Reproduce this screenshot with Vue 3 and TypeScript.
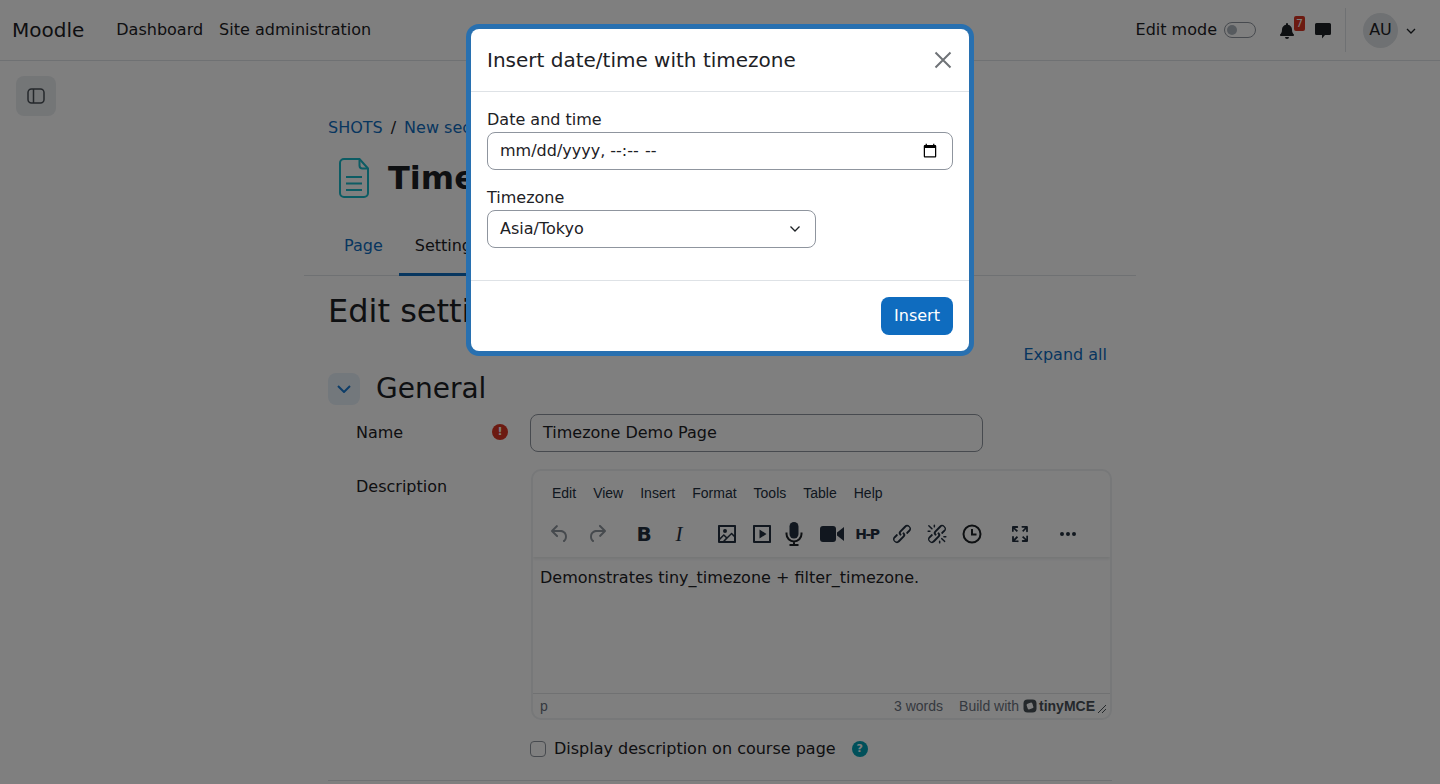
<script setup lang="ts">
const menuItems = ['Edit', 'View', 'Insert', 'Format', 'Tools', 'Table', 'Help']
</script>

<template>
  <div class="page">
    <header class="navbar">
      <span class="brand">Moodle</span>
      <nav class="primary">
        <a>Dashboard</a>
        <a>Site administration</a>
      </nav>
      <div class="nav-right">
        <span class="edit-label">Edit mode</span>
        <span class="switch"><i></i></span>
        <span class="bell">
          <svg width="14" height="16" viewBox="0 0 448 512"><path fill="#1d2125" d="M224 512a64 64 0 0 0 64-64H160a64 64 0 0 0 64 64zm215-150c-19-21-55-52-55-154 0-78-54-140-128-155V32a32 32 0 1 0-64 0v21C118 68 64 130 64 208c0 102-36 133-55 154a31 31 0 0 0-9 22c0 16 13 32 32 32h384c19 0 32-16 32-32a31 31 0 0 0-9-22z" /></svg>
          <b class="badge">7</b>
        </span>
        <svg class="comment" width="18" height="18" viewBox="0 0 18 18"><path fill="#1d2125" d="M2.500 1h13A1.500 1.500 0 0 1 17 2.500v9a1.500 1.500 0 0 1-1.500 1.500H11l-3 3.500V13H2.500A1.500 1.500 0 0 1 1 11.500v-9A1.500 1.500 0 0 1 2.500 1z" /></svg>
        <span class="divider"></span>
        <span class="avatar">AU</span>
        <svg class="caret" width="10" height="6" viewBox="0 0 10 6"><path d="M1 1l4 4 4-4" fill="none" stroke="#1d2125" stroke-width="1.300" /></svg>
      </div>
    </header>

    <button class="drawer-toggle">
      <svg width="18" height="16" viewBox="0 0 18 16"><rect x="1" y="1" width="16" height="14" rx="3.500" fill="none" stroke="#495057" stroke-width="1.500" /><path d="M6.500 1v14" stroke="#495057" stroke-width="1.500" /></svg>
    </button>

    <main class="column">
      <div class="inner">
        <div class="crumbs"><a>SHOTS</a><span>/</span><a>New section</a></div>
        <div class="title-row">
          <svg class="page-icon" width="30" height="40" viewBox="0 0 30 40"><path d="M5 1h15.500L29 10.500V35a4 4 0 0 1-4 4H5a4 4 0 0 1-4-4V5a4 4 0 0 1 4-4z" fill="none" stroke="#18b8c8" stroke-width="2" /><path d="M20.500 1v6.500a3 3 0 0 0 3 3H29M7 19h16M7 25.500h16M7 32h16" fill="none" stroke="#18b8c8" stroke-width="2" /></svg>
          <h1>Timezone Demo Page</h1>
        </div>
      </div>
      <div class="tabs">
        <a>Page</a>
        <a class="active">Settings</a>
      </div>
      <div class="inner">
        <h2>Edit settings</h2>
        <div class="expand-row"><a>Expand all</a></div>
        <div class="section-head">
          <span class="collapse"><svg width="14" height="8" viewBox="0 0 14 8"><path d="M1 1l6 6 6-6" fill="none" stroke="#1b7bd0" stroke-width="2" /></svg></span>
          <h3>General</h3>
        </div>
        <div class="field name-field">
          <label>Name</label>
          <span class="req">!</span>
          <div class="fake-input">Timezone Demo Page</div>
        </div>
        <div class="field desc-field">
          <label>Description</label>
          <div class="editor">
            <div class="menubar">
              <span v-for="item in menuItems" :key="item">{{ item }}</span>
            </div>
            <div class="toolbar">
              <svg class="tb off" viewBox="0 0 24 24"><path d="M6.400 8H12c3.700 0 6.200 2 6.800 5.100.6 2.700-.4 5.600-2.300 6.800a1 1 0 0 1-1-1.800c1.100-.6 1.800-2.700 1.400-4.600-.5-2.100-2.100-3.500-4.900-3.500H6.400l3.300 3.300a1 1 0 1 1-1.400 1.400l-5-5a1 1 0 0 1 0-1.400l5-5a1 1 0 0 1 1.400 1.400L6.400 8Z" /></svg>
              <svg class="tb off redo" viewBox="0 0 24 24"><path d="M17.600 10H12c-2.800 0-4.400 1.400-4.900 3.500-.4 2 .3 4 1.400 4.600a1 1 0 1 1-1 1.800c-2-1.200-2.900-4.100-2.300-6.800.6-3 3-5.100 6.800-5.100h5.600l-3.300-3.300a1 1 0 1 1 1.400-1.400l5 5a1 1 0 0 1 0 1.400l-5 5a1 1 0 0 1-1.400-1.400l3.300-3.300Z" /></svg>
              <span class="tb bold">B</span>
              <span class="tb ital">I</span>
              <svg class="tb wide" viewBox="0 0 24 24"><path d="m5 15.700 3.300-3.200c.3-.3.700-.3 1 0L12 15l4.100-4c.3-.4.800-.4 1 0l2 1.900V5H5v10.700ZM5 18V19h3l2.800-2.900-2-2L5 17.900Zm14-3-2.500-2.400-6.400 6.500H19v-4ZM4 3h16c.6 0 1 .4 1 1v16c0 .6-.4 1-1 1H4a1 1 0 0 1-1-1V4c0-.6.400-1 1-1Zm6 8a2 2 0 1 0 0-4 2 2 0 0 0 0 4Z" /></svg>
              <svg class="tb" viewBox="0 0 24 24"><path fill-rule="evenodd" d="M4 3h16c.6 0 1 .4 1 1v16c0 .6-.4 1-1 1H4a1 1 0 0 1-1-1V4c0-.6.400-1 1-1Zm1 2v14h14V5H5Zm4.500 2.500 7 4.500-7 4.500v-9Z" /></svg>
              <svg class="tb mic" viewBox="0 0 24 24"><rect x="7.500" y="0" width="9" height="16.500" rx="4.500" /><path d="M4.500 10.500V12a7.500 7.500 0 0 0 15 0v-1.500M12 19.500V23M7.500 23h9" fill="none" stroke="#1d2125" stroke-width="2" /></svg>
              <svg class="tb video" viewBox="0 0 24 24"><rect x="0" y="4" width="16" height="16" rx="3" /><path d="M17 10.500 24 5v14l-7-5.500z" /></svg>
              <span class="tb h5p">H-P</span>
              <svg class="tb" viewBox="0 0 24 24"><path d="M6.200 12.300a1 1 0 0 1 1.400 1.400l-2 2a2 2 0 1 0 2.600 2.800l4.800-4.800a1 1 0 0 0 0-1.400 1 1 0 1 1 1.400-1.300 2.900 2.900 0 0 1 0 4L9.600 20a3.900 3.900 0 0 1-5.500-5.500l2-2Zm11.600-.6a1 1 0 0 1-1.400-1.400l2-2a2 2 0 1 0-2.600-2.800L11 10.300a1 1 0 0 0 0 1.400 1 1 0 1 1-1.400 1.300 2.900 2.900 0 0 1 0-4L14.400 4a3.900 3.900 0 0 1 5.500 5.500l-2 2Z" /></svg>
              <svg class="tb" viewBox="0 0 24 24"><path d="M6.200 12.300a1 1 0 0 1 1.400 1.400l-2.100 2a2 2 0 1 0 2.700 2.800l4.800-4.800a1 1 0 0 0 0-1.400 1 1 0 1 1 1.400-1.300 2.900 2.900 0 0 1 0 4L9.600 20a3.900 3.900 0 0 1-5.500-5.500l2-2Zm11.600-.6a1 1 0 0 1-1.400-1.400l2.100-2a2 2 0 1 0-2.700-2.800L11 10.300a1 1 0 0 0 0 1.400A1 1 0 1 1 9.600 13a2.900 2.900 0 0 1 0-4L14.400 4a3.900 3.900 0 0 1 5.500 5.500l-2 2ZM7.600 6.300a.8.8 0 0 1-1 1.100L3.300 4.200a.7.7 0 1 1 1-1l3.200 3.100ZM5.100 8.600a.8.8 0 0 1 0 1.500H3a.8.8 0 0 1 0-1.500H5Zm5-3.500a.8.8 0 0 1-1.500 0V3a.8.8 0 0 1 1.500 0v2Zm6 11.800a.8.8 0 0 1 1-1l3.200 3.200a.8.8 0 0 1-1 1L16 17Zm-2.200 2a.8.8 0 0 1 1.500 0V21a.8.8 0 0 1-1.500 0V19Zm5-3.500a.7.7 0 1 1 0-1.500H21a.8.8 0 0 1 0 1.500H19Z" /></svg>
              <svg class="tb" viewBox="0 0 24 24"><circle cx="12" cy="12" r="8.500" fill="none" stroke="#1d2125" stroke-width="2" /><path d="M12 7v5.500h4.500" fill="none" stroke="#1d2125" stroke-width="2" /></svg>
              <svg class="tb wide" viewBox="0 0 24 24"><path d="m15.300 10-1.200-1.300 2.900-3h-2.300a.9.900 0 1 1 0-1.700H19c.5 0 .9.400.9.900v4.400a.9.900 0 1 1-1.800 0V7l-2.900 3Zm0 4 3 3v-2.300a.9.900 0 1 1 1.700 0V19c0 .5-.4.900-.9.900h-4.400a.9.900 0 1 1 0-1.800H17l-3-2.900 1.300-1.200ZM10 15.400l-2.900 3h2.300a.9.900 0 1 1 0 1.700H5a.9.900 0 0 1-.9-.9v-4.400a.9.900 0 1 1 1.800 0V17l2.900-3 1.200 1.300ZM8.700 10 5.700 7v2.300a.9.900 0 0 1-1.700 0V5c0-.5.400-.9.900-.9h4.400a.9.900 0 0 1 0 1.800H7l3 2.900-1.300 1.200Z" /></svg>
              <svg class="tb wide" viewBox="0 0 24 24"><path d="M6 10a2 2 0 1 0 0 4 2 2 0 0 0 0-4Zm12 0a2 2 0 1 0 0 4 2 2 0 0 0 0-4Zm-6 0a2 2 0 1 0 0 4 2 2 0 0 0 0-4Z" /></svg>
            </div>
            <div class="edit-area">Demonstrates tiny_timezone + filter_timezone.</div>
            <div class="statusbar">
              <span class="path">p</span>
              <span class="words">3 words</span>
              <span class="built">Build with</span>
              <svg class="tiny-logo" width="14" height="14" viewBox="0 0 14 14"><rect x="0.500" y="0.500" width="13" height="13" rx="4" fill="#495057" /><rect x="4" y="4" width="6" height="6" rx="1.500" fill="#fff" transform="rotate(-20 7 7)" /></svg>
              <span class="tiny-name">tinyMCE</span>
              <svg class="grip" width="10" height="10" viewBox="0 0 10 10"><path d="M1 9l8-8M5 9l4-4" stroke="#495057" stroke-width="1" /></svg>
            </div>
          </div>
        </div>
        <div class="check-row">
          <span class="check"></span>
          <span>Display description on course page</span>
          <span class="help">?</span>
        </div>
        <hr class="rule" />
      </div>
    </main>

    <div class="backdrop">
      <div class="modal">
        <div class="modal-head">
          <h5>Insert date/time with timezone</h5>
          <svg width="18" height="18" viewBox="0 0 18 18"><path d="M1.500 1.500l15 15M16.500 1.500l-15 15" stroke="#6f7377" stroke-width="2" /></svg>
        </div>
        <div class="modal-body">
          <label class="mlabel">Date and time</label>
          <input class="dt" type="datetime-local" />
          <label class="mlabel tz-label">Timezone</label>
          <div class="select">
            <span>Asia/Tokyo</span>
            <svg width="12" height="8" viewBox="0 0 12 8"><path d="M1.500 1.500 6 6l4.500-4.500" fill="none" stroke="#1d2125" stroke-width="1.300" /></svg>
          </div>
        </div>
        <div class="modal-foot">
          <button class="insert">Insert</button>
        </div>
      </div>
    </div>
  </div>
</template>

<style>
html, body {
  margin: 0;
  overflow: hidden;
  background: #fff;
}
</style>

<style scoped>
.page {
  height: 784px;
  overflow: hidden;
  position: relative;
  font-family: "DejaVu Sans", sans-serif;
  font-size: 16px;
  line-height: 24px;
  color: #1d2125;
}
a { color: #0f6cbf; }

.navbar {
  height: 60px;
  border-bottom: 1px solid #dee2e6;
  display: flex;
  align-items: center;
  padding: 0 20px 0 12px;
}
.brand { font-size: 20px; color: #1d2125; }
.primary { display: flex; gap: 16px; margin-left: 32px; }
.primary a { color: #1d2125; }
.nav-right { margin-left: auto; display: flex; align-items: center; }
.edit-label { margin-right: 7px; }
.switch {
  width: 32px;
  height: 16px;
  box-sizing: border-box;
  border: 1px solid #8f959e;
  border-radius: 8px;
  display: flex;
  align-items: center;
  padding-left: 2px;
}
.switch i { width: 10px; height: 10px; border-radius: 50%; background: #adb5bd; }
.bell { position: relative; display: flex; margin-left: 24px; margin-top: 1px; }
.badge {
  position: absolute;
  left: 14px;
  top: -7px;
  width: 11px;
  height: 15px;
  background: #d83522;
  border-radius: 2px;
  color: #fff;
  font-size: 11px;
  font-weight: 400;
  line-height: 15px;
  text-align: center;
}
.comment { margin-left: 20px; margin-top: 1px; }
.divider { width: 1px; height: 44px; background: #dee2e6; margin-left: 13px; }
.avatar {
  width: 35px;
  height: 35px;
  border-radius: 50%;
  background: #dee2e6;
  margin-left: 17px;
  display: flex;
  align-items: center;
  justify-content: center;
}
.caret { margin-left: 8px; margin-right: 4px; margin-top: 2px; }

.drawer-toggle {
  position: absolute;
  left: 16px;
  top: 76px;
  width: 40px;
  height: 40px;
  border: 0;
  border-radius: 8px;
  background: #e9ecef;
  padding: 0;
  display: flex;
  align-items: center;
  justify-content: center;
}

.column { width: 832px; margin: 0 auto; }
.inner { padding: 0 24px; }
.crumbs { display: flex; gap: 8px; margin-top: 55px; white-space: nowrap; }
.title-row { display: flex; align-items: center; margin-top: 18px; height: 40px; padding-left: 11px; }
.page-icon { flex: none; }
h1 { margin: 0 0 0 19px; font-size: 32px; line-height: 40px; font-weight: 700; color: #1d2125; white-space: nowrap; }

.tabs {
  display: flex;
  margin-top: 26px;
  padding-left: 24px;
  border-bottom: 1px solid #dee2e6;
}
.tabs a { padding: 10px 16px 0; height: 52px; box-sizing: border-box; line-height: 24px; margin-bottom: -1px; }
.tabs .active { color: #1d2125; border-bottom: 3px solid #0f6cbf; }

h2 { margin: 16px 0 0; font-size: 32px; line-height: 38px; font-weight: 400; white-space: nowrap; }
.expand-row { display: flex; justify-content: flex-end; padding-right: 5px; margin-top: 13px; }
.section-head { display: flex; align-items: center; height: 32px; margin-top: 6px; }
.collapse {
  width: 32px;
  height: 32px;
  border-radius: 8px;
  background: #e7f0f9;
  display: flex;
  align-items: center;
  justify-content: center;
}
h3 { margin: 0 0 0 16px; font-size: 28px; line-height: 32px; font-weight: 400; }

.field { display: flex; position: relative; padding-left: 28px; }
.field label { width: 174px; flex: none; }
.name-field { margin-top: 9px; align-items: center; }
.req {
  position: absolute;
  left: 164px;
  top: 10px;
  width: 16px;
  height: 16px;
  border-radius: 50%;
  background: #d83522;
  color: #fff;
  font-size: 11px;
  font-weight: 700;
  line-height: 16px;
  text-align: center;
}
.fake-input {
  width: 453px;
  height: 38px;
  box-sizing: border-box;
  border: 1px solid #8f959e;
  border-radius: 8px;
  padding: 6px 12px;
}
.desc-field { margin-top: 17px; }
.desc-field label { margin-top: 6px; width: 175px; }
.editor {
  width: 581px;
  height: 251px;
  box-sizing: border-box;
  border: 2px solid #eef0f2;
  border-radius: 10px;
  display: flex;
  flex-direction: column;
  overflow: hidden;
}
.menubar {
  display: flex;
  gap: 17px;
  height: 45px;
  padding: 9px 0 0 19px;
  box-sizing: border-box;
  font-family: "Liberation Sans", sans-serif;
  font-size: 14px;
  line-height: 26px;
  color: #222f3e;
}
.toolbar {
  display: flex;
  align-items: center;
  height: 41px;
  padding: 0 0 5px 15px;
  box-sizing: border-box;
  box-shadow: 0 2px 3px rgba(34, 47, 62, 0.1);
  position: relative;
}
.tb {
  width: 24px;
  height: 24px;
  flex: none;
  margin-left: 11px;
  fill: #222f3e;
  font-size: 18px;
  line-height: 24px;
  text-align: center;
  color: #222f3e;
}
.tb:first-child { margin-left: 0; }
.tb.off { fill: #8d949c; }
.tb.redo { margin-left: 13px; }
.tb.wide { margin-left: 24px; }
.tb.bold { font-weight: 700; font-size: 20px; margin-left: 23px; }
.tb.ital { font-family: "Liberation Serif", serif; font-style: italic; font-size: 21px; }
.tb.mic { margin-left: 8px; }
.tb.video { margin-left: 14px; }
.tb.h5p { font-size: 14px; font-weight: 900; letter-spacing: -1.500px; white-space: nowrap; }
.edit-area { flex: 1; padding: 9px 7px 0; }
.statusbar {
  height: 25px;
  flex: none;
  box-sizing: border-box;
  border-top: 1px solid #e0e2e5;
  display: flex;
  align-items: center;
  padding: 0 3px 0 7px;
  font-family: "Liberation Sans", sans-serif;
  font-size: 14px;
  color: #6b7280;
}
.words { margin-left: auto; }
.built { margin-left: 16px; }
.tiny-logo { margin-left: 4px; }
.tiny-name { margin-left: 2px; font-weight: 700; font-size: 14px; color: #495057; }
.grip { margin-left: 2px; margin-top: 6px; }

.check-row { display: flex; align-items: center; gap: 8px; margin-top: 17px; padding-left: 202px; white-space: nowrap; }
.check {
  width: 16px;
  height: 16px;
  box-sizing: border-box;
  border: 1px solid #8f959e;
  border-radius: 4px;
}
.help {
  width: 16px;
  height: 16px;
  border-radius: 50%;
  background: #00a0b4;
  color: #fff;
  font-size: 11px;
  font-weight: 700;
  line-height: 16px;
  text-align: center;
  margin-left: 8px;
}
.rule { border: 0; border-top: 1px solid #dee2e6; margin: 19px 0 0; }

.backdrop {
  position: absolute;
  inset: 0;
  background: rgba(0, 0, 0, 0.5);
  display: flex;
  justify-content: center;
  align-items: flex-start;
  padding-top: 29px;
}
.modal {
  width: 498px;
  background: #fff;
  border-radius: 8px;
  box-shadow: 0 0 0 5px #2870b0;
}
.modal-head {
  height: 63px;
  box-sizing: border-box;
  border-bottom: 1px solid #dee2e6;
  display: flex;
  align-items: center;
  justify-content: space-between;
  padding: 0 17px 0 16px;
}
h5 { margin: 0; font-size: 20px; line-height: 24px; font-weight: 400; }
.modal-body { padding: 16px 16px 32px; display: flex; flex-direction: column; align-items: flex-start; }
.mlabel { height: 24px; }
.tz-label { margin-top: 16px; }
.dt {
  width: 466px;
  height: 38px;
  box-sizing: border-box;
  border: 1px solid #8f959e;
  border-radius: 8px;
  padding: 6px 12px;
  font: inherit;
  color: #1d2125;
  background: #fff;
}
.dt::-webkit-datetime-edit,
.dt::-webkit-datetime-edit-fields-wrapper,
.dt::-webkit-datetime-edit-text,
.dt::-webkit-datetime-edit-month-field,
.dt::-webkit-datetime-edit-day-field,
.dt::-webkit-datetime-edit-year-field,
.dt::-webkit-datetime-edit-hour-field,
.dt::-webkit-datetime-edit-minute-field {
  padding: 0;
}
.dt::-webkit-datetime-edit-ampm-field {
  padding: 0 0 0 3px;
}
.select {
  width: 329px;
  height: 38px;
  box-sizing: border-box;
  border: 1px solid #8f959e;
  border-radius: 8px;
  padding: 0 14px 0 12px;
  display: flex;
  align-items: center;
  justify-content: space-between;
}
.modal-foot {
  border-top: 1px solid #dee2e6;
  padding: 16px;
  display: flex;
  justify-content: flex-end;
}
.insert {
  height: 38px;
  width: 72px;
  padding: 0;
  border: 0;
  border-radius: 8px;
  background: #0f6cbf;
  color: #fff;
  font: inherit;
}
</style>
